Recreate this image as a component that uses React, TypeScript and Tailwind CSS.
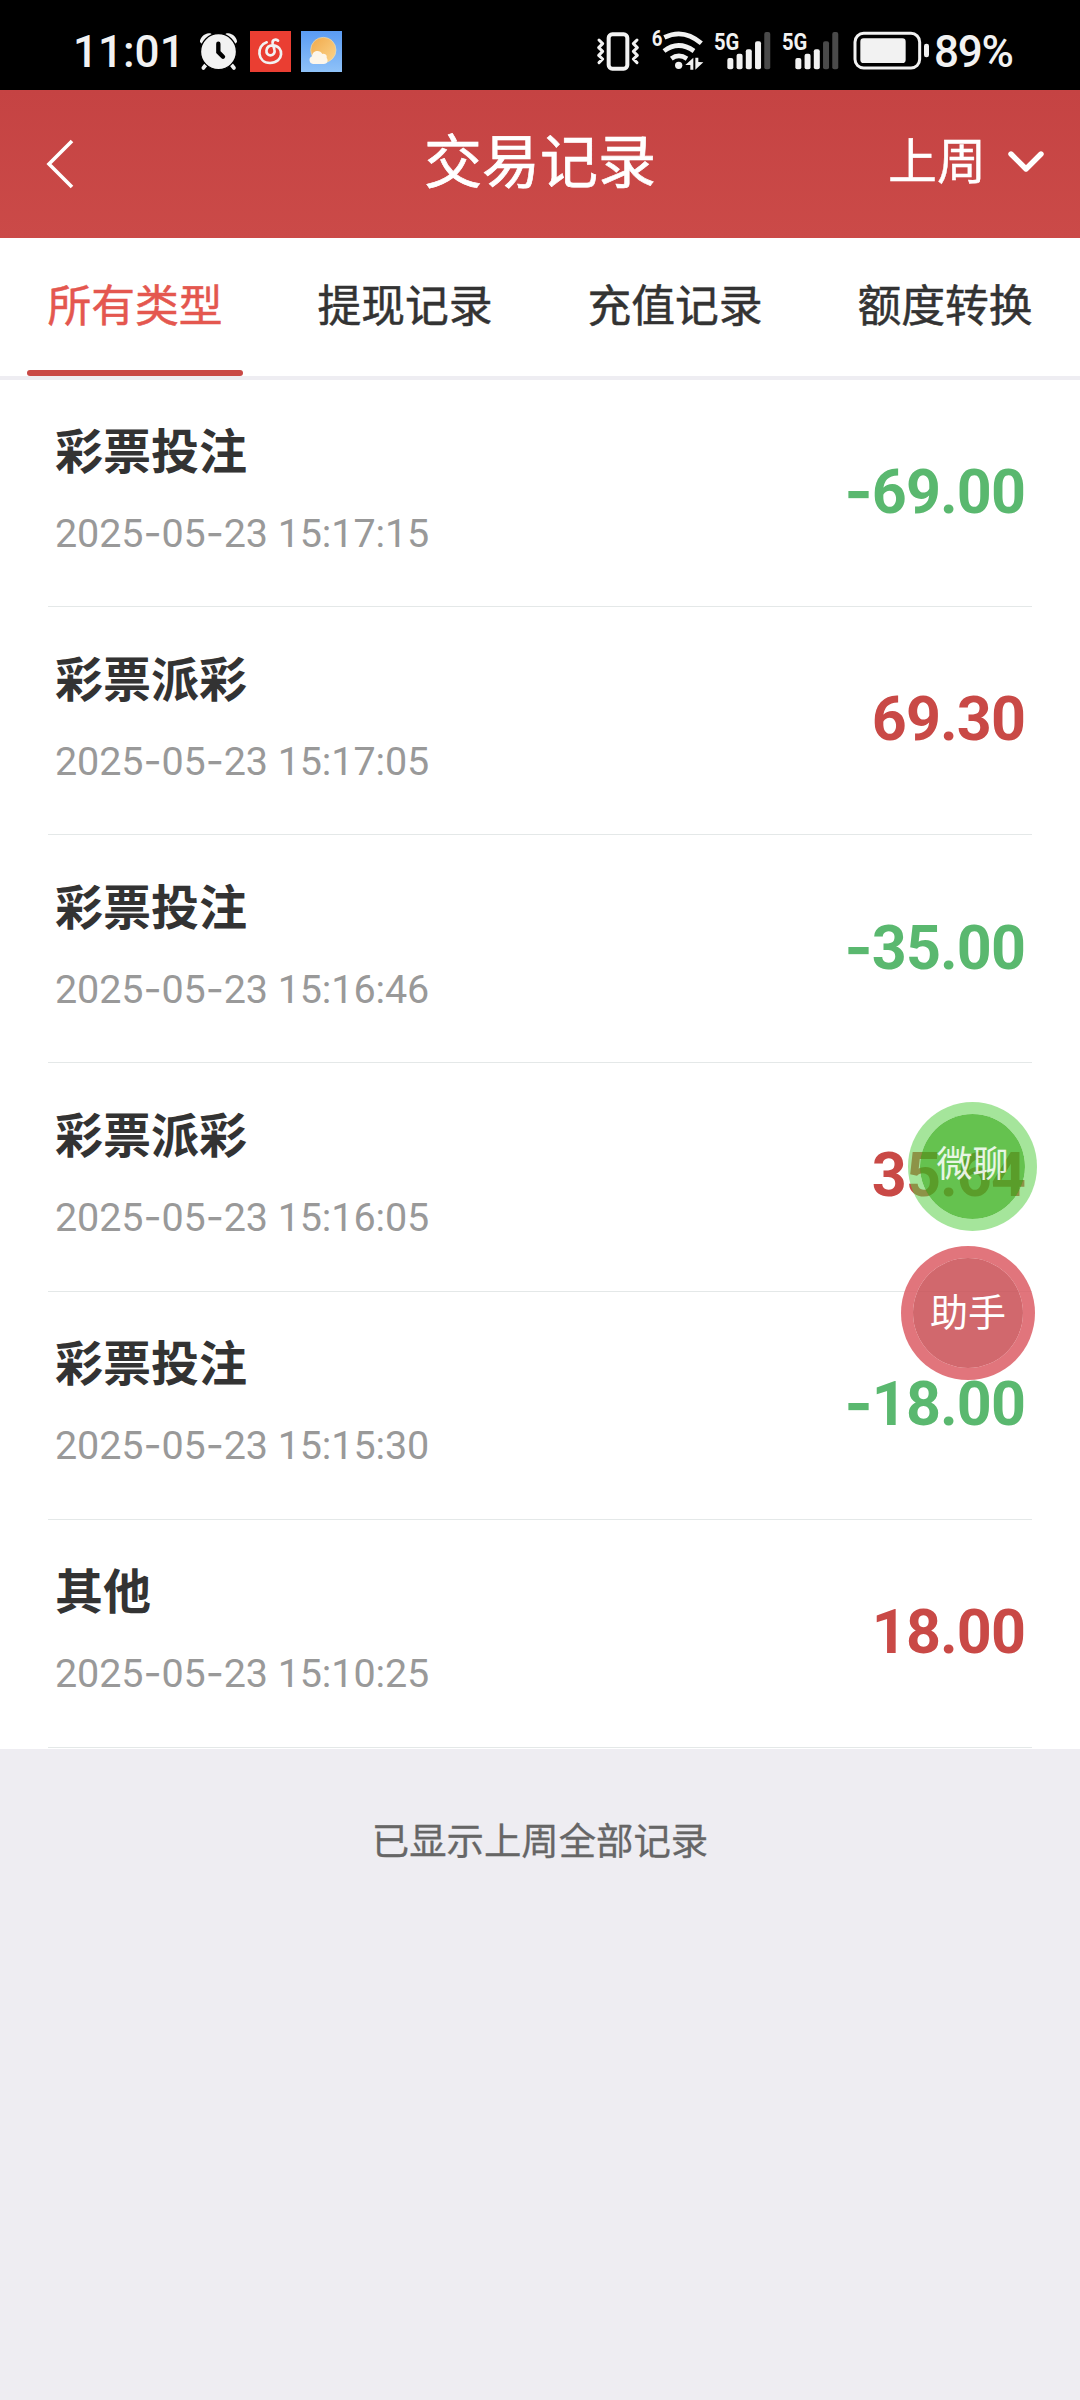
import { clsx } from "clsx"

const tabs = ["所有类型", "提现记录", "充值记录", "额度转换"]

const records = [
  { title: "彩票投注", time: "2025-05-23 15:17:15", amount: "-69.00" },
  { title: "彩票派彩", time: "2025-05-23 15:17:05", amount: "69.30" },
  { title: "彩票投注", time: "2025-05-23 15:16:46", amount: "-35.00" },
  { title: "彩票派彩", time: "2025-05-23 15:16:05", amount: "35.64" },
  { title: "彩票投注", time: "2025-05-23 15:15:30", amount: "-18.00" },
  { title: "其他", time: "2025-05-23 15:10:25", amount: "18.00" },
]

export default function App() {
  return (
    <div className="relative flex h-[2400px] w-[1080px] flex-col overflow-hidden bg-[#eeedf2] font-['Noto_Sans_CJK_SC',sans-serif] text-[#333]">
      <StatusBar />

      {/* 标题栏 */}
      <header className="grid h-[148px] grid-cols-3 items-center bg-gradient-to-b from-[#c54343] to-[#cb4a48] text-white">
        <svg className="ml-[44px] h-[52px] w-[32px]" viewBox="0 0 32 52" fill="none" stroke="currentColor" strokeWidth="3.6">
          <path d="M28 3L5 26l23 23" />
        </svg>
        <h1 className="-mt-[13px] whitespace-nowrap text-center text-[58px] leading-none [-webkit-text-stroke:0.7px]">交易记录</h1>
        <div className="flex items-center justify-end pr-[35px] text-[49px] leading-none">
          <span className="-mt-[13px] [-webkit-text-stroke:0.4px]">上周</span>
          <svg className="-mt-[5px] ml-[21px] h-[24px] w-[38px]" viewBox="0 0 38 24" fill="none" stroke="currentColor" strokeWidth="5.4" strokeLinecap="round" strokeLinejoin="round">
            <path d="M4 4l15 15L34 4" />
          </svg>
        </div>
      </header>

      {/* 类型切换 */}
      <nav className="grid h-[142px] grid-cols-4 border-b-4 border-[#eeedf2] bg-white">
        {tabs.map((tab, i) => (
          <div key={tab} className={clsx("flex flex-col items-center", i === 0 && "text-[#e4574f]")}>
            <span className="flex h-[132px] items-center pb-px text-[43.8px] leading-none [-webkit-text-stroke:0.5px]">{tab}</span>
            {i === 0 && <span className="h-[6px] w-[216px] rounded-full bg-[#c94946]" />}
          </div>
        ))}
      </nav>

      {/* 交易列表 */}
      <ul className="bg-white px-[48px] pb-px">
        {records.map((r) => (
          <Record key={r.time} {...r} />
        ))}
      </ul>

      <p className="mt-[70px] text-center text-[37.4px] leading-[40px] text-[#666] [-webkit-text-stroke:0.3px]">已显示上周全部记录</p>

      {/* 悬浮按钮 */}
      <button className="absolute left-[908px] top-[1102px] flex h-[129px] w-[129px] items-center justify-center rounded-full border-[12px] border-[#5bcf49]/55 bg-[#3eb323]/80 bg-clip-padding pb-[11px] text-[36px] leading-none text-white/85">
        微聊
      </button>
      <button className="absolute left-[901px] top-[1246px] flex h-[134px] w-[134px] items-center justify-center rounded-full border-[12px] border-[#d9535b]/80 bg-[#c94f55]/86 bg-clip-padding pb-[6px] text-[38px] leading-none text-white">
        助手
      </button>
    </div>
  )
}

function Record({ title, time, amount }: { title: string; time: string; amount: string }) {
  const negative = amount.startsWith("-")
  return (
    <li className="flex h-[228.2px] items-center justify-between border-b border-[#e4e8e8] pl-[7px] pr-[7px] first:h-[227px]">
      <div className="-mt-[10px]">
        <div className="text-[48px] font-bold leading-[56px]">{title}</div>
        <div className="mt-[35px] whitespace-nowrap font-['Roboto',sans-serif] text-[39.5px] leading-[44px] tracking-[-0.1px] text-[#999]">
          <Digits text={time} />
        </div>
      </div>
      <div className={clsx("-mt-[2px] font-['Roboto',sans-serif] text-[61px] font-bold leading-none tracking-[-0.9px]", negative ? "text-[#5ab86f]" : "text-[#c94946]")}>
        <Digits text={amount} />
      </div>
    </li>
  )
}

// 连字符用更宽的字体
function Digits({ text }: { text: string }) {
  return text.split(/(-)/).map((part, i) =>
    part === "-" ? <span key={i} className="font-['Inter',sans-serif]">-</span> : part,
  )
}

function StatusBar() {
  return (
    <div className="flex h-[90px] items-start bg-black pt-[30px] font-['Roboto',sans-serif] text-[44px] font-medium leading-[42px] text-[#f2f2f2]">
      <span className="w-[125px] whitespace-nowrap pl-[73px] pt-px">11:01</span>
      <svg className="ml-[74px] h-[42px] w-[39px] shrink-0" viewBox="447 60 117 126" fill="currentColor">
        <path d="M450 96c-2-12 16-30 31-26l5 3-31 28zM561 96c2-12-16-30-31-26l-5 3 31 28z" />
        <path d="M467 165l-7 9M545 165l7 9" stroke="currentColor" strokeWidth="11" strokeLinecap="round" />
        <circle cx="505.500" cy="125" r="54" stroke="#000" strokeWidth="4" />
        <path d="M505 101v25l14 14" fill="none" stroke="#000" strokeWidth="13" strokeLinecap="round" />
      </svg>
      <svg className="ml-[12px] mt-px h-[41px] w-[41px] shrink-0 bg-[#ea3e32]" viewBox="600 63 123 123" fill="none" stroke="currentColor" strokeWidth="8" strokeLinecap="round">
        <path d="M650 97C618 107 621 158 660 159c42 0 44-52 8-53-23 0-24 30-7 30 10 0 15-9 12-18l-5-18c-2-10 8-14 16-8" />
      </svg>
      <svg className="ml-[10px] mt-px h-[41px] w-[41px] shrink-0" viewBox="0 0 123 123">
        <defs>
          <linearGradient id="sky" x1="0" y1="0" x2="0" y2="1">
            <stop offset="0" stopColor="#5a9bf3" />
            <stop offset="1" stopColor="#8fc2f8" />
          </linearGradient>
          <linearGradient id="sun" x1="0" y1="0" x2="1" y2="1">
            <stop offset="0" stopColor="#f2a94a" />
            <stop offset="1" stopColor="#fbd58c" />
          </linearGradient>
        </defs>
        <path d="M0 0h123v123H0z" fill="url(#sky)" />
        <circle cx="67" cy="57" r="38" fill="url(#sun)" stroke="#e3dcc0" strokeWidth="2" />
        <path d="M36 99a12 12 0 0 1-3-23c1-19 25-21 31-7 10-3 15 5 13 12 7 9 0 18-8 18z" fill="#fdf6ea" />
      </svg>

      <div className="ml-auto flex items-start pr-[66px]">
        <svg className="h-[42px] w-[44px]" viewBox="48 60 132 126" fill="none" stroke="currentColor" strokeLinejoin="round" strokeLinecap="round">
          <rect x="86" y="73" width="56" height="103" rx="11" strokeWidth="12" />
          <path d="M57 90l11 11-12 12 12 11-12 12 12 11-11 11M171 90l-11 11 12 12-12 11 12 12-12 11 11 11" strokeWidth="9" />
        </svg>
        <svg className="ml-[10px] h-[42px] w-[54px] overflow-visible" viewBox="210 60 162 126" fill="none" stroke="currentColor">
          <text x="215" y="109" fontSize="64" fontWeight="700" fill="currentColor" stroke="none" textLength="32" lengthAdjust="spacingAndGlyphs">6</text>
          <path d="M253 82q58-28 111 18M252 123q43-33 90 0M274 146q22-16 47 0" strokeWidth="14" />
          <circle cx="296" cy="166" r="11" fill="currentColor" stroke="none" />
          <path d="M340 143v36h-9v-14h-15zM346 179v-36h9v13l15 1z" fill="currentColor" stroke="none" />
        </svg>
        <Signal level={4} className="ml-[9px]" />
        <Signal level={3} className="ml-[10px]" />
        <svg className="ml-[14px] h-[42px] w-[77px]" viewBox="99 60 231 126" fill="none">
          <rect x="105" y="70" width="194" height="104" rx="26" stroke="currentColor" strokeWidth="9" />
          <rect x="121" y="85" width="136" height="74" rx="10" fill="currentColor" />
          <rect x="312" y="101" width="15" height="41" rx="7" fill="currentColor" />
        </svg>
        <span className="ml-[4px] w-[80px] whitespace-nowrap pt-px tracking-[-1.2px]">89%</span>
      </div>
    </div>
  )
}

function Signal({ level, className }: { level: number; className: string }) {
  return (
    <svg className={clsx("h-[42px] w-[58px] overflow-visible", className)} viewBox="399 60 174 126" fill="currentColor">
      <text x="402" y="120" fontSize="74" fontWeight="700" textLength="76" lengthAdjust="spacingAndGlyphs">5G</text>
      {[34, 47, 60, 84, 112].map((h, i) => (
        <rect key={h} x={442 + i * 27.7} y={178 - h} width="18" height={h} rx="6" fill={i < level ? "#f2f2f2" : "#4a4a4a"} />
      ))}
    </svg>
  )
}
